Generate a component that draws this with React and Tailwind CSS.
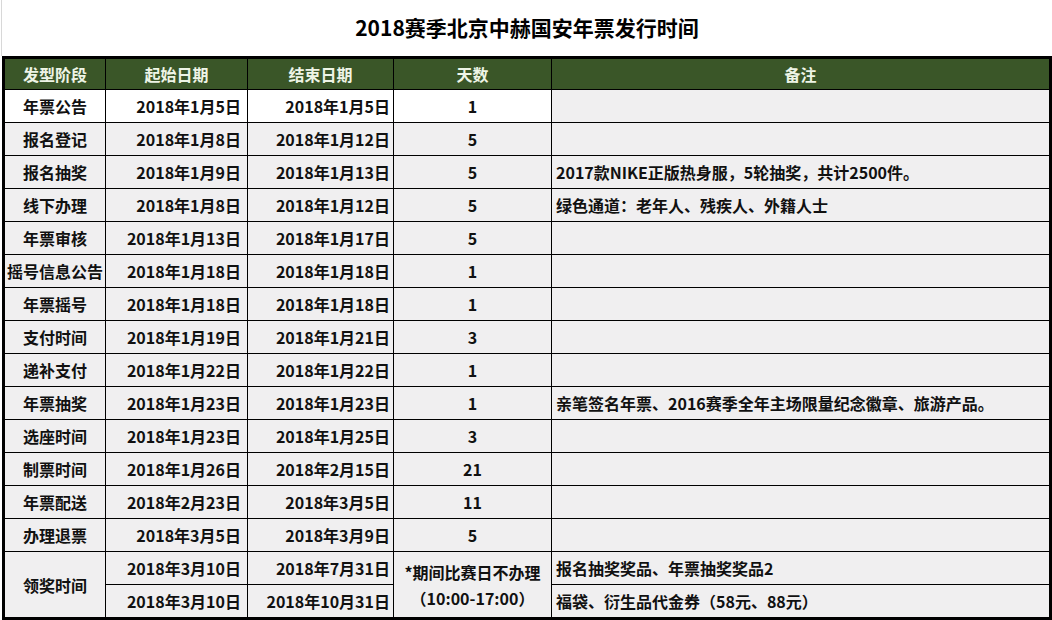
import React from "react";

const rows = [
  ["年票公告", "2018年1月5日", "2018年1月5日", "1", "", true],
  ["报名登记", "2018年1月8日", "2018年1月12日", "5", ""],
  ["报名抽奖", "2018年1月9日", "2018年1月13日", "5", "2017款NIKE正版热身服，5轮抽奖，共计2500件。"],
  ["线下办理", "2018年1月8日", "2018年1月12日", "5", "绿色通道：老年人、残疾人、外籍人士"],
  ["年票审核", "2018年1月13日", "2018年1月17日", "5", ""],
  ["摇号信息公告", "2018年1月18日", "2018年1月18日", "1", ""],
  ["年票摇号", "2018年1月18日", "2018年1月18日", "1", ""],
  ["支付时间", "2018年1月19日", "2018年1月21日", "3", ""],
  ["递补支付", "2018年1月22日", "2018年1月22日", "1", ""],
  ["年票抽奖", "2018年1月23日", "2018年1月23日", "1", "亲笔签名年票、2016赛季全年主场限量纪念徽章、旅游产品。"],
  ["选座时间", "2018年1月23日", "2018年1月25日", "3", ""],
  ["制票时间", "2018年1月26日", "2018年2月15日", "21", ""],
  ["年票配送", "2018年2月23日", "2018年3月5日", "11", ""],
  ["办理退票", "2018年3月5日", "2018年3月9日", "5", ""],
];

const font = { fontFamily: '"Microsoft YaHei", "Noto Sans CJK SC", "Noto Sans", sans-serif' };

function Cell({ children, className = "" }) {
  return (
    <div className={`flex items-center whitespace-nowrap bg-[#f0eff0] ${className}`}>
      {children}
    </div>
  );
}

export default function App() {
  return (
    <div className="w-[1052px] h-[620px] bg-white overflow-hidden text-[#111]" style={font}>
      <div className="h-[56px] ml-[1px] border-l border-[#d8d8d8] flex items-center justify-center">
        <h1 className="text-[21px] font-bold leading-none text-black pb-[1px]">2018赛季北京中赫国安年票发行时间</h1>
      </div>
      <div className="ml-[2px] w-[1050px] border-[3px] border-black bg-black grid grid-cols-[100px_141px_145px_157px_497px] grid-rows-[30px_repeat(16,32px)] gap-[1px] text-[16px] font-bold leading-none">
        {["发型阶段", "起始日期", "结束日期", "天数", "备注"].map((h) => (
          <div key={h} className="bg-[#3a5628] text-[#eef4e6] flex items-center justify-center">
            {h}
          </div>
        ))}
        {rows.map((r, i) => (
          <React.Fragment key={i}>
            <Cell className={`justify-center ${r[5] ? "bg-white" : ""}`}>{r[0]}</Cell>
            <Cell className={`justify-end pr-[6px] ${r[5] ? "bg-white" : ""}`}>{r[1]}</Cell>
            <Cell className={`justify-end pr-[3px] ${r[5] ? "bg-white" : ""}`}>{r[2]}</Cell>
            <Cell className={`justify-center ${r[5] ? "bg-white" : ""}`}>{r[3]}</Cell>
            <Cell className="pl-[4px]">{r[4]}</Cell>
          </React.Fragment>
        ))}
        <Cell className="row-span-2 justify-center">领奖时间</Cell>
        <Cell className="justify-end pr-[6px]">2018年3月10日</Cell>
        <Cell className="justify-end pr-[3px]">2018年7月31日</Cell>
        <div className="row-span-2 bg-[#f0eff0] flex flex-col items-center justify-center leading-[26px]">
          <span>*期间比赛日不办理</span>
          <span>（10:00-17:00）</span>
        </div>
        <Cell className="pl-[4px]">报名抽奖奖品、年票抽奖奖品2</Cell>
        <Cell className="justify-end pr-[6px]">2018年3月10日</Cell>
        <Cell className="justify-end pr-[3px]">2018年10月31日</Cell>
        <Cell className="pl-[4px]">福袋、衍生品代金券（58元、88元）</Cell>
      </div>
    </div>
  );
}
